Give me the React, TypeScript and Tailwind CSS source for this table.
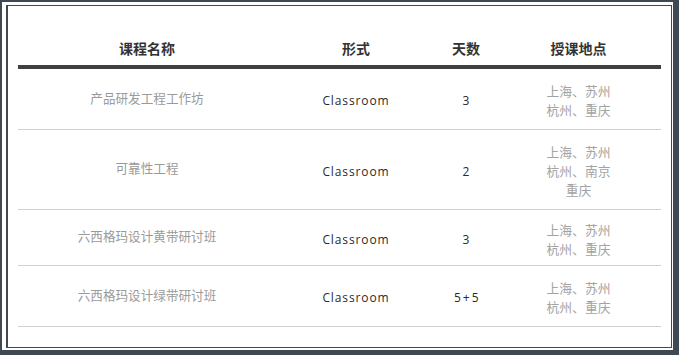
import React from 'react';

type Course = {
  name: string;
  mode: string;
  days: string;
  places: string[];
  height: string;
};

const courses: Course[] = [
  { name: '产品研发工程工作坊', mode: 'Classroom', days: '3', places: ['上海、苏州', '杭州、重庆'], height: 'h-[61px]' },
  { name: '可靠性工程', mode: 'Classroom', days: '2', places: ['上海、苏州', '杭州、南京', '重庆'], height: 'h-[80px]' },
  { name: '六西格玛设计黄带研讨班', mode: 'Classroom', days: '3', places: ['上海、苏州', '杭州、重庆'], height: 'h-[56px]' },
  { name: '六西格玛设计绿带研讨班', mode: 'Classroom', days: '5 + 5', places: ['上海、苏州', '杭州、重庆'], height: 'h-[61px]' },
];

const cols = 'grid grid-cols-[258px_160px_60px_165px]';
const font = "font-['Liberation_Sans','Noto_Sans_CJK_SC',sans-serif]";

export default function App() {
  return (
    <div className={`w-[679px] h-[355px] bg-[#3f4853] pl-[2px] pt-[2px] ${font}`}>
      <div className="w-[671px] h-[348px] bg-white pl-[4px] pr-[1px] pt-[3px] pb-[2px]">
        {/* inner frame */}
        <div className="h-full border border-l-2 border-[#3f4853] px-[10px]">
          {/* header */}
          <div className={`${cols} pt-[33px] pb-[6px] text-[14px] leading-[20px] font-bold text-[#333]`}>
            <div className="text-center">课程名称</div>
            <div className="text-center">形式</div>
            <div className="text-center">天数</div>
            <div className="text-center">授课地点</div>
          </div>
          <div className="h-[4px] bg-[#404040]" />

          {courses.map((c) => (
            <div key={c.name} className={`${cols} ${c.height} pt-[4px] items-center border-b border-[#d2d2d2]`}>
              <div className="text-center text-[12.6px] text-[#9a9a9a] -mt-[4px]">{c.name}</div>
              <div className="text-center font-['Open_Sans',sans-serif] text-[12px] tracking-[0.9px] text-[#2a2a2a]">{c.mode}</div>
              <div className="text-center font-['Open_Sans',sans-serif] text-[12px] text-[#2a2a2a] whitespace-pre">
                {c.days === '5 + 5' ? <span className="tracking-[-0.6px]">5 + 5</span> : c.days}
              </div>
              <div className="text-center text-[12.8px] leading-[19px] text-[#a3a3a3]">
                {c.places.map((p) => (
                  <div key={p}>{p}</div>
                ))}
              </div>
            </div>
          ))}
        </div>
      </div>
    </div>
  );
}
